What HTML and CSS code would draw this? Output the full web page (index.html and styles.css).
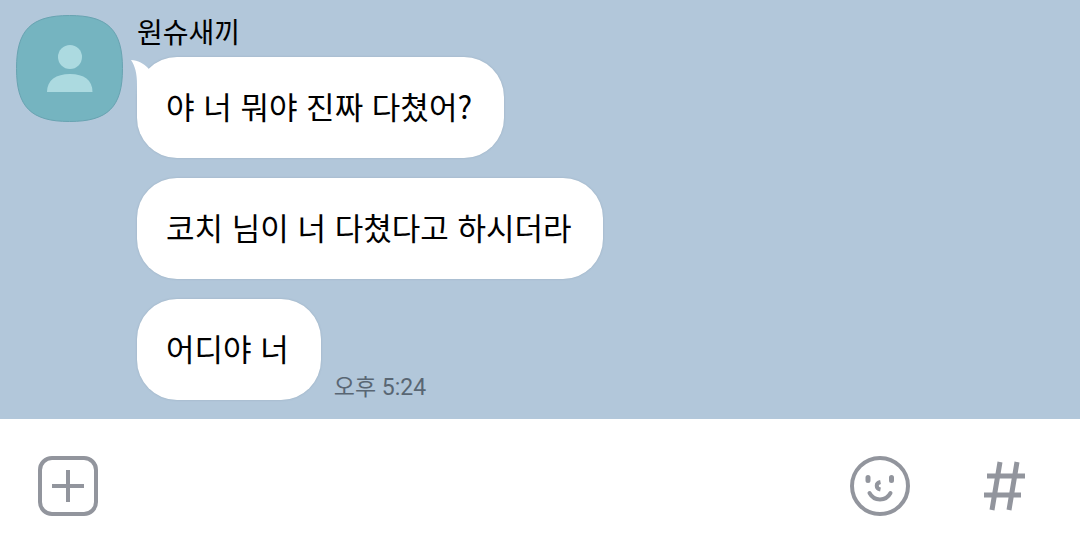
FILE: index.html
```html
<!DOCTYPE html>
<html lang="ko">
  <head>
    <meta charset="UTF-8" />
    <meta name="viewport" content="width=device-width, initial-scale=1.0" />
    <title>원슈새끼</title>
    <link rel="stylesheet" href="styles.css">
  </head>
  <body>
    <main class="chat">
      <svg class="avatar" viewBox="0 0 107 107" aria-hidden="true">
        <path
          class="avatar-bg"
          d="M53.5 .5C92 .5 106.500 15 106.500 53.500S92 106.500 53.500 106.500 .5 92 .5 53.500 15 .5 53.500 .5Z"
        />
        <circle class="avatar-person" cx="54" cy="42" r="12" />
        <path class="avatar-person" d="M31 77C31 65 40 59 54 59S76.500 65 76.500 77Z" />
      </svg>
      <div class="messages">
        <h1 class="name">원슈새끼</h1>
        <div class="row">
          <p class="bubble">
            <svg class="tail" viewBox="0 0 24 44" aria-hidden="true">
              <path d="M0 3C7 3 13 7 17 11L24 20 10 44 6 40V28C6 16 4 9 0 3Z" />
            </svg>
            야 너 뭐야 진짜 다쳤어?
          </p>
        </div>
        <div class="row">
          <p class="bubble">코치 님이 너 다쳤다고 하시더라</p>
        </div>
        <div class="row">
          <p class="bubble">어디야 너</p>
          <time class="time" datetime="17:24">오후 5:24</time>
        </div>
      </div>
    </main>

    <form class="composer">
      <button type="button" aria-label="추가">
        <svg viewBox="0 0 60 60">
          <rect x="2" y="2" width="56" height="56" rx="12" />
          <path d="M30 14V46M14 30H46" />
        </svg>
      </button>
      <input type="text" aria-label="메시지" />
      <button type="button" aria-label="이모티콘">
        <svg viewBox="0 0 60 60">
          <circle cx="30" cy="30" r="28" />
          <path class="eyes" d="M18 21.500V24.500M41.500 21.500V24.500" />
          <path class="nose" d="M30.500 26C25.500 27 25.500 32.500 30.500 33.500" />
          <path class="smile" d="M19.500 37C24 45.500 36 45.500 40.500 37" />
        </svg>
      </button>
      <button type="button" class="hash" aria-label="샵검색">
        <svg viewBox="0 0 60 60">
          <path d="M25 6L17 54M42 6L34 54M12 20H50M9 39H46" />
        </svg>
      </button>
    </form>
  </body>
</html>
```

FILE: styles.css
```css
* {
  margin: 0;
  padding: 0;
  box-sizing: border-box;
}

body {
  display: flex;
  flex-direction: column;
  min-height: 100vh;
  background: #fff;
  color: #000;
  font-family: "Noto Sans CJK KR", sans-serif;
}

.chat {
  flex: 1;
  display: flex;
  align-items: flex-start;
  gap: 14px;
  padding: 15px 16px 19px;
  background: #b2c7da;
}
.avatar {
  flex: none;
  width: 107px;
  height: 107px;
}
.avatar-bg {
  fill: #75b4c0;
  stroke: #68a3b1;
}
.avatar-person {
  fill: #acdae0;
}
.messages {
  display: flex;
  flex-direction: column;
  gap: 20px;
}
.name {
  margin-bottom: -10px;
  font-size: 28px;
  font-weight: 400;
  line-height: 32px;
}
.row {
  display: flex;
  align-items: flex-end;
  gap: 13px;
}
.bubble {
  position: relative;
  padding: 28px 32px 32px 29px;
  background: #fff;
  border-radius: 40px;
  box-shadow: 0 0 2px rgba(90, 110, 130, 0.3);
  font-size: 31px;
  line-height: 41px;
}
/* little tail pointing at the avatar */
.tail {
  position: absolute;
  top: 0;
  left: -6px;
  width: 24px;
  height: 44px;
  fill: #fff;
}
.time {
  color: #596673;
  font-family: Roboto, "Noto Sans CJK KR", sans-serif;
  font-size: 23px;
  line-height: 24px;
}

.composer {
  display: flex;
  align-items: center;
  padding: 37px 45px 37px 38px;
}
.composer input {
  flex: 1;
  min-width: 0;
  height: 60px;
  padding: 0 20px;
  border: 0;
  outline: 0;
  background: transparent;
  font: inherit;
  font-size: 31px;
}
.composer button {
  flex: none;
  width: 60px;
  height: 60px;
  border: 0;
  background: none;
  cursor: pointer;
}
.composer .hash {
  margin-left: 65px;
}
.composer svg {
  display: block;
  width: 60px;
  height: 60px;
  fill: none;
  stroke: #92959d;
  stroke-width: 4;
}
.composer .eyes {
  stroke-width: 5;
  stroke-linecap: round;
}
.composer .nose {
  stroke-width: 4;
}
.composer .smile {
  stroke-linecap: round;
}
.composer .hash svg {
  stroke-width: 5;
}
```
